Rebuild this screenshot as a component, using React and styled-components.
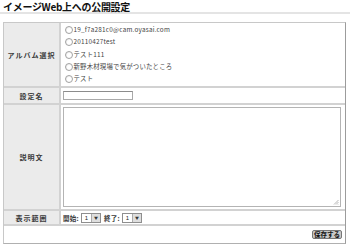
import React from "react";
import styled, { createGlobalStyle } from "styled-components";

const GlobalStyle = createGlobalStyle`
  html, body {
    margin: 0;
    background: #ffffff;
  }
  body {
    font-family: "Noto Sans CJK JP", "Liberation Sans", sans-serif;
    color: #222;
  }
`;

const ALBUMS = [
  "19_f7a281c0@cam.oyasai.com",
  "20110427test",
  "テスト111",
  "新野木材現場で気がついたところ",
  "テスト",
];

const App = () => {
  return (
    <Page>
      <GlobalStyle />
      <Title>イメージWeb上への公開設定</Title>
      <FormTable>
        <Label>アルバム選択</Label>
        <Cell $pad="1px 0 1px 4px">
          {ALBUMS.map((name) => (
            <RadioRow key={name}>
              <Radio />
              <RadioText>{name}</RadioText>
            </RadioRow>
          ))}
        </Cell>

        <Label>設定名</Label>
        <Cell $pad="3px 0 3px 2px">
          <TextInput />
        </Cell>

        <Label>説明文</Label>
        <Cell $pad="2px 4px 2px 2px">
          <TextArea>
            <Grip viewBox="0 0 6 6">
              <path d="M1 5.5 L5.5 1 M3 5.5 L5.5 3 M5 5.5 L5.5 5" stroke="#999" strokeWidth="0.7" />
            </Grip>
          </TextArea>
        </Cell>

        <Label>表示範囲</Label>
        <Cell $pad="3px 0 2px 2px">
          <RangeRow>
            <RangeText>開始:</RangeText>
            <Select>
              <SelectValue>1</SelectValue>
              <SelectArrow>▼</SelectArrow>
            </Select>
            <RangeText>終了:</RangeText>
            <Select>
              <SelectValue>1</SelectValue>
              <SelectArrow>▼</SelectArrow>
            </Select>
          </RangeRow>
        </Cell>

        <Footer>
          <SaveButton>保存する</SaveButton>
        </Footer>
      </FormTable>
    </Page>
  );
};

const Page = styled.div`
  width: 350px;
  height: 244px;
  overflow: hidden;
`;

const Title = styled.h1`
  margin: 0;
  padding: 2px 0 0 3px;
  height: 10px;
  font-size: 10px;
  line-height: 10px;
  font-weight: bold;
  color: #111;
  letter-spacing: -0.3px;
  border-bottom: 2px solid #e4e4e4;
`;

const FormTable = styled.div`
  display: grid;
  grid-template-columns: 55px 1fr;
  grid-template-rows: 63px 15px 104px 13px 17px;
  gap: 2px;
  margin: 8px 0 0 3px;
  width: 343px;
  background: #d2d2d2;
  border: 1px solid #c8c8c8;
  border-right-color: #9c9c9c;
  border-bottom-color: #b0b0b0;
  box-sizing: border-box;
`;

const Label = styled.div`
  display: flex;
  align-items: center;
  justify-content: center;
  background: #ebebeb;
  font-size: 7px;
  font-weight: bold;
  letter-spacing: 1px;
  color: #3a3a3a;
`;

const Cell = styled.div`
  background: #ffffff;
  padding: ${(p) => p.$pad};
  display: flex;
  flex-direction: column;
  justify-content: center;
`;

const RadioRow = styled.div`
  display: flex;
  align-items: center;
  gap: 0.5px;
  height: 12.4px;
`;

const Radio = styled.span`
  width: 6px;
  height: 6px;
  border-radius: 50%;
  border: 1px solid #a2a2a2;
  background: radial-gradient(circle at 60% 60%, #ffffff 40%, #e2e2e2 100%);
`;

const RadioText = styled.span`
  font-size: 6.4px;
  line-height: 8px;
  color: #444;
  letter-spacing: 0.2px;
`;

const TextInput = styled.div`
  width: 68px;
  height: 7px;
  border: 1px solid #a9a9a9;
  border-top-color: #8c8c8c;
  background: #fff;
`;

const TextArea = styled.div`
  position: relative;
  height: 100px;
  border: 1px solid #b4b4b4;
  background: #fff;
`;

const Grip = styled.svg`
  position: absolute;
  right: 1px;
  bottom: 1px;
  width: 6px;
  height: 6px;
`;

const RangeRow = styled.div`
  display: flex;
  align-items: center;
  gap: 2px;
`;

const RangeText = styled.span`
  font-size: 6.5px;
  font-weight: bold;
  color: #3a3a3a;
  letter-spacing: 0.3px;
`;

const Select = styled.div`
  display: flex;
  align-items: stretch;
  height: 8px;
  border: 1px solid #8e8e8e;
  background: #fff;
  margin-right: 1px;
`;

const SelectValue = styled.span`
  width: 9px;
  font-family: "Liberation Sans", sans-serif;
  font-size: 6px;
  line-height: 8px;
  text-align: center;
  color: #222;
`;

const SelectArrow = styled.span`
  width: 8px;
  background: #dedede;
  border-left: 1px solid #aaa;
  font-size: 4px;
  line-height: 9px;
  text-align: center;
  color: #333;
`;

const Footer = styled.div`
  grid-column: 1 / -1;
  background: #fff;
  display: flex;
  align-items: center;
  justify-content: flex-end;
  padding-right: 3px;
`;

const SaveButton = styled.button`
  height: 9px;
  padding: 0 1px;
  border: 1px solid #777;
  border-radius: 2px;
  background: #c8c8c8;
  font-family: "Noto Sans CJK JP", sans-serif;
  font-size: 6.5px;
  font-weight: bold;
  line-height: 7px;
  color: #111;
`;

export default App;
